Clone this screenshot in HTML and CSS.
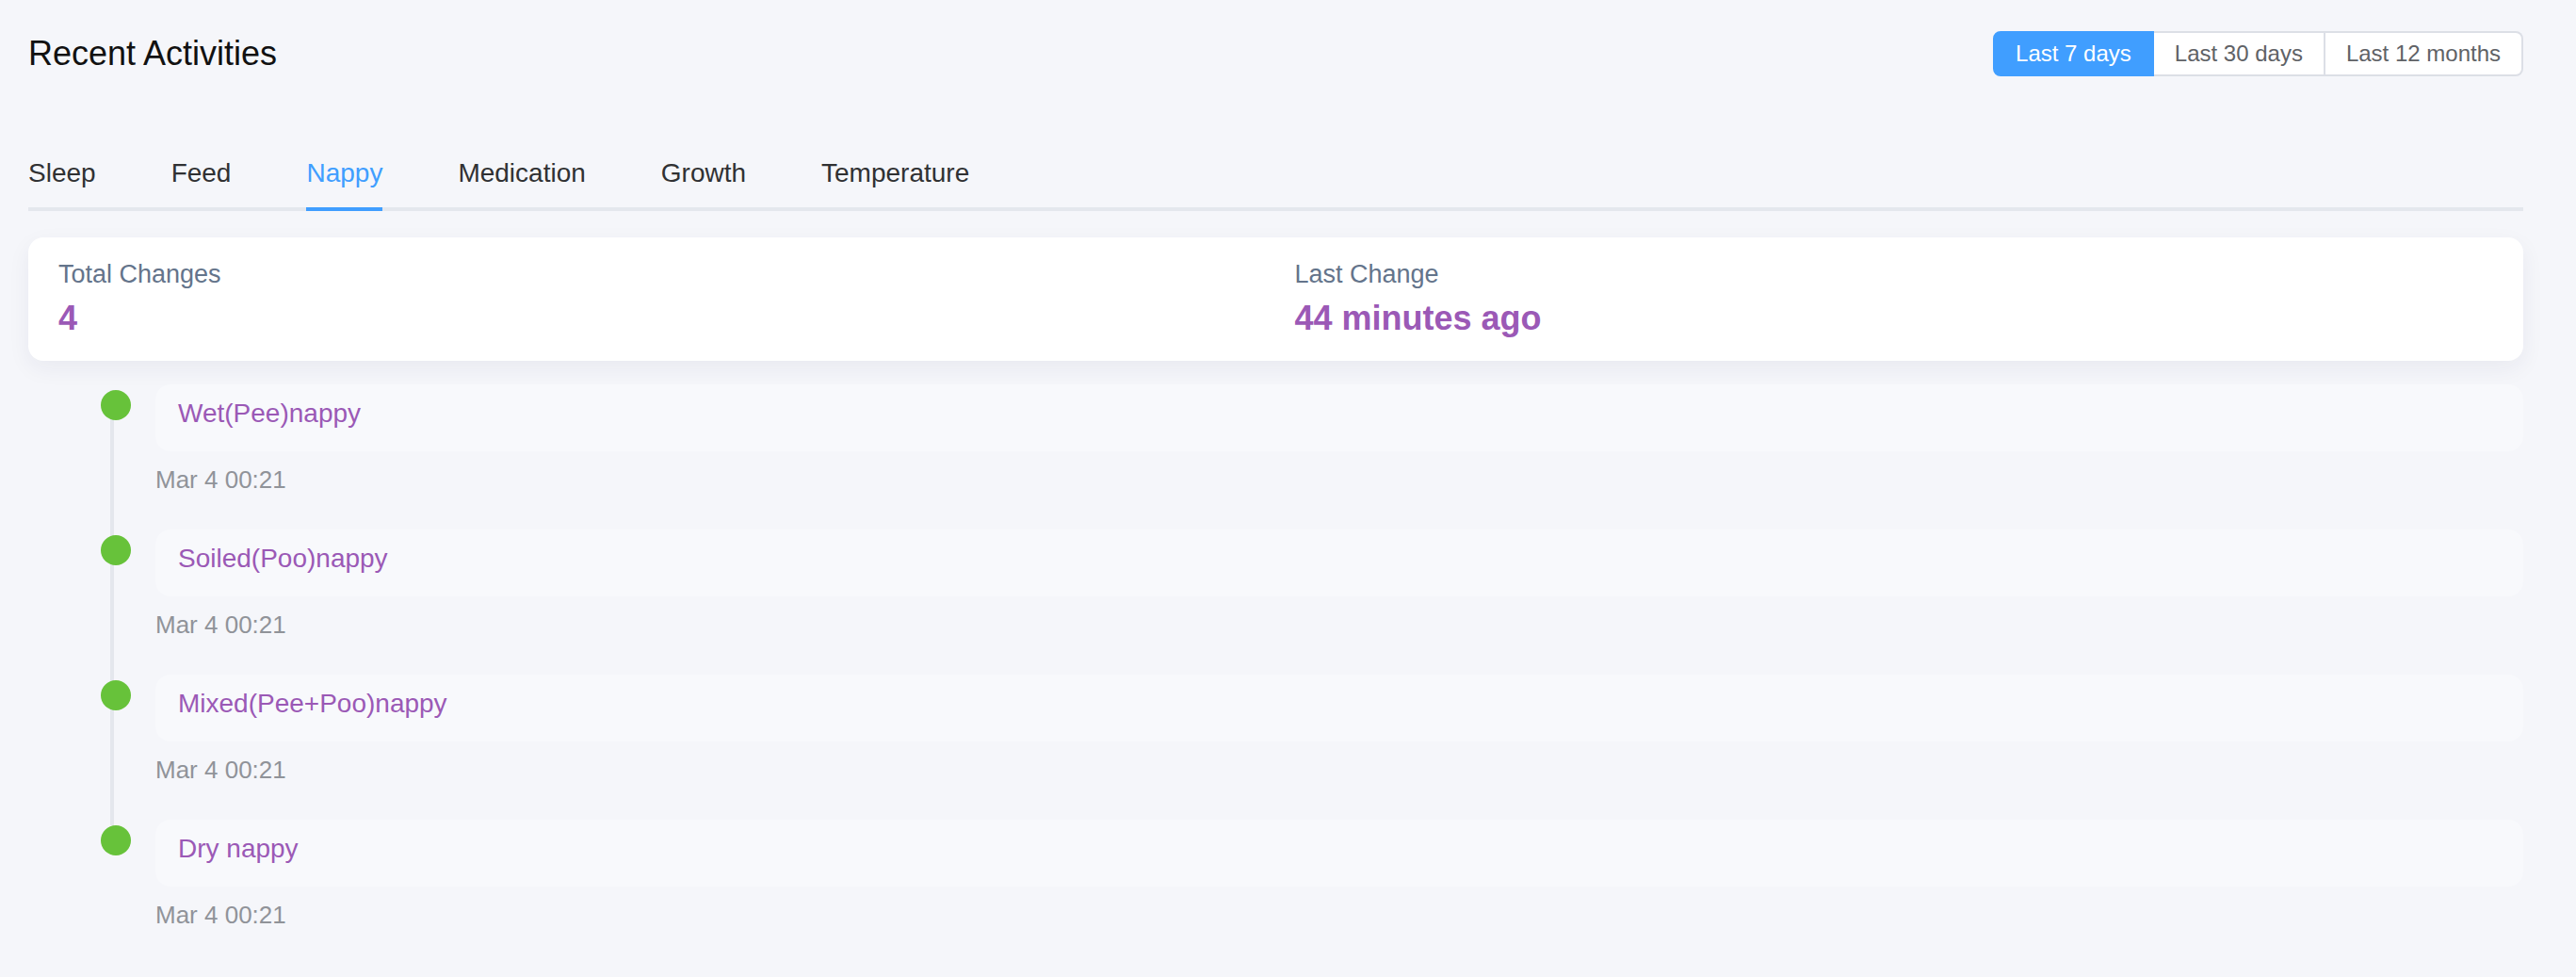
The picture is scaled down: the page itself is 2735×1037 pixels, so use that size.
FILE: index.html
```html
<!DOCTYPE html>
<html lang="en">
<head>
<meta charset="utf-8">
<title>Recent Activities</title>
<link rel="stylesheet" href="styles.css">
</head>
<body>
<div class="page">
  <header class="header">
    <h1 class="title">Recent Activities</h1>
    <div class="range">
      <button class="range-btn is-active">Last 7 days</button>
      <button class="range-btn">Last 30 days</button>
      <button class="range-btn">Last 12 months</button>
    </div>
  </header>

  <nav class="tabs">
    <div class="tab"><span class="tab-label">Sleep</span></div>
    <div class="tab"><span class="tab-label">Feed</span></div>
    <div class="tab is-active"><span class="tab-label">Nappy</span></div>
    <div class="tab"><span class="tab-label">Medication</span></div>
    <div class="tab"><span class="tab-label">Growth</span></div>
    <div class="tab"><span class="tab-label">Temperature</span></div>
  </nav>

  <section class="summary">
    <div class="stat">
      <div class="stat-label">Total Changes</div>
      <div class="stat-value">4</div>
    </div>
    <div class="stat">
      <div class="stat-label">Last Change</div>
      <div class="stat-value">44 minutes ago</div>
    </div>
  </section>

  <ul class="timeline">
    <li class="tl-item">
      <span class="tl-tail"></span>
      <span class="tl-node"></span>
      <div class="tl-content">Wet(Pee)nappy</div>
      <div class="tl-time">Mar 4 00:21</div>
    </li>
    <li class="tl-item">
      <span class="tl-tail"></span>
      <span class="tl-node"></span>
      <div class="tl-content">Soiled(Poo)nappy</div>
      <div class="tl-time">Mar 4 00:21</div>
    </li>
    <li class="tl-item">
      <span class="tl-tail"></span>
      <span class="tl-node"></span>
      <div class="tl-content">Mixed(Pee+Poo)nappy</div>
      <div class="tl-time">Mar 4 00:21</div>
    </li>
    <li class="tl-item">
      <span class="tl-tail"></span>
      <span class="tl-node"></span>
      <div class="tl-content">Dry nappy</div>
      <div class="tl-time">Mar 4 00:21</div>
    </li>
  </ul>
</div>
</body>
</html>
```

FILE: styles.css
```css
html, body {
  margin: 0;
  padding: 0;
  background: #f5f6fa;
  font-family: "Liberation Sans", Arial, Helvetica, sans-serif;
}

.page {
  padding: 33px 56px 0 30px;
}

.header {
  display: flex;
  justify-content: space-between;
  align-items: center;
}

.title {
  margin: 0;
  font-size: 36px;
  font-weight: normal;
  color: #111;
}

.range {
  display: flex;
  height: 48px;
}

.range-btn {
  font-family: inherit;
  font-size: 24px;
  color: #606266;
  background: #fff;
  border: 2px solid #dcdfe6;
  border-left-width: 0;
  padding: 0 22px;
  margin: 0;
  height: 48px;
  cursor: pointer;
}

.range-btn:first-child {
  border-left-width: 2px;
  border-radius: 8px 0 0 8px;
}

.range-btn:last-child {
  border-radius: 0 8px 8px 0;
}

.range-btn.is-active {
  background: #409eff;
  border-color: #409eff;
  color: #fff;
}

.tabs {
  display: flex;
  margin-top: 63px;
  box-shadow: inset 0 -4px 0 #e4e7ed;
}

.tab {
  padding: 0 40px;
}

.tab:first-child {
  padding-left: 0;
}

.tab:last-child {
  padding-right: 0;
}

.tab-label {
  display: block;
  height: 80px;
  line-height: 80px;
  font-size: 28px;
  color: #303133;
}

.tab.is-active .tab-label {
  color: #409eff;
  box-shadow: inset 0 -4px 0 #409eff;
}

.summary {
  margin-top: 28px;
  background: #fff;
  border-radius: 16px;
  box-shadow: 0 8px 24px rgba(30, 40, 80, 0.06);
  padding: 24px 32px;
  display: grid;
  grid-template-columns: 1fr 1fr;
  column-gap: 40px;
}

.stat-label {
  font-size: 27px;
  color: #64748b;
}

.stat-value {
  margin-top: 10px;
  font-size: 36px;
  font-weight: bold;
  color: #9b59b6;
}

.timeline {
  list-style: none;
  margin: 25px 0 0 0;
  padding: 0 0 0 79px;
}

.tl-item {
  position: relative;
  padding: 0 0 37px 56px;
}

.tl-tail {
  position: absolute;
  left: 8px;
  top: 6px;
  bottom: -6px;
  width: 4px;
  background: #e4e7ed;
}

.tl-item:last-child .tl-tail {
  display: none;
}

.tl-node {
  position: absolute;
  left: -2px;
  top: 6px;
  width: 32px;
  height: 32px;
  border-radius: 50%;
  background: #67c23a;
}

.tl-content {
  background: #f8f9fc;
  border-radius: 16px;
  padding: 15px 24px 24px;
  font-size: 28px;
  color: #9b59b6;
}

.tl-time {
  margin-top: 15px;
  font-size: 26px;
  color: #909399;
}
```
